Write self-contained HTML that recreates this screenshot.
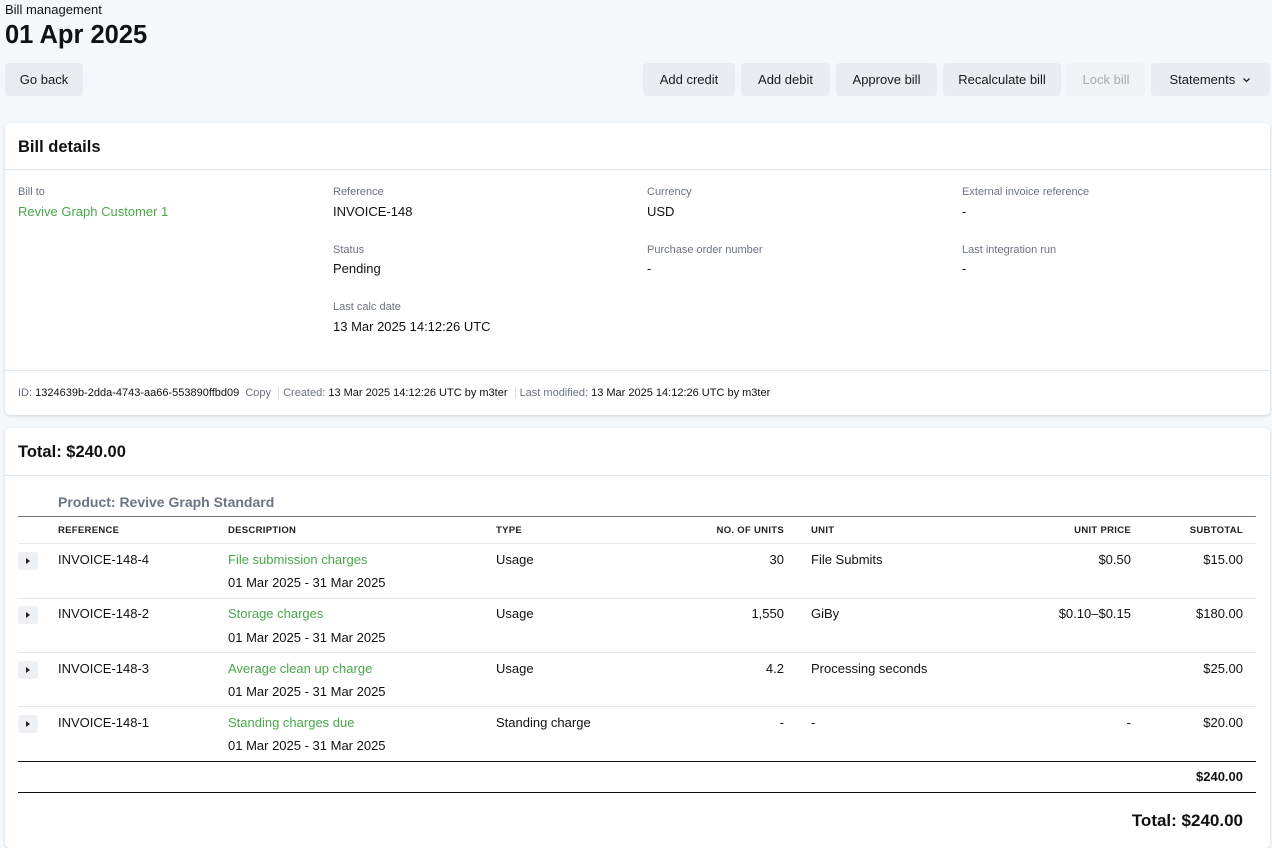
<!DOCTYPE html>
<html><head><meta charset="utf-8"><style>
*{box-sizing:border-box;margin:0;padding:0}
body{width:1272px;height:834px;overflow:hidden;background:#f5f8fb;font-family:"Liberation Sans",sans-serif;color:#111;font-size:13px;position:relative}
.a{position:absolute;white-space:nowrap}
.btn{position:absolute;top:63px;height:33px;background:#e9edf1;border-radius:4px;font-size:13px;line-height:33px;text-align:center;color:#1a1a1a}
.card{position:absolute;left:5px;width:1265px;background:#fff;border-radius:5px;box-shadow:0 1px 3px rgba(0,0,0,.15)}
.lbl{font-size:11px;color:#6b7380}
.g{color:#4aa84a}
.th{font-size:9.5px;font-weight:bold;letter-spacing:.3px;color:#222}
.r{text-align:right}
.hl{position:absolute;left:18px;width:1238px;height:1px;background:#e3e7ec}
.tog{position:absolute;left:18px;width:20px;height:18px;background:#eef1f4;border-radius:3px}
.tog:after{content:"";position:absolute;left:8px;top:6px;border-left:4px solid #222;border-top:3px solid transparent;border-bottom:3px solid transparent}
</style></head><body>
<div class="a" style="left:5px;top:2px;font-size:13px">Bill management</div>
<div class="a" style="left:5px;top:21px;font-size:25.5px;font-weight:bold">01 Apr 2025</div>
<div class="btn" style="left:5px;width:78px">Go back</div>
<div class="btn" style="left:643px;width:92px">Add credit</div>
<div class="btn" style="left:741px;width:89px">Add debit</div>
<div class="btn" style="left:836px;width:101px">Approve bill</div>
<div class="btn" style="left:943px;width:118px">Recalculate bill</div>
<div class="btn" style="left:1067px;width:78px;background:#f0f3f6;color:#aaa">Lock bill</div>
<div class="btn" style="left:1151px;width:119px">Statements &nbsp;<svg width="9" height="6" viewBox="0 0 9 6" style="vertical-align:1px"><path d="M1.5 1.5 L4.5 4.5 L7.5 1.5" fill="none" stroke="#222" stroke-width="1.3"/></svg></div>

<div class="card" style="top:123px;height:292px">
<div class="a" style="left:13px;top:15px;font-size:16.5px;font-weight:bold">Bill details</div>
<div class="a" style="left:0;top:46px;width:1265px;height:1px;background:#e3e7ec"></div>
<div class="a lbl" style="left:13px;top:63px">Bill to</div>
<div class="a g" style="left:13px;top:81px">Revive Graph Customer 1</div>
<div class="a lbl" style="left:328px;top:63px">Reference</div>
<div class="a" style="left:328px;top:81px">INVOICE-148</div>
<div class="a lbl" style="left:328px;top:121px">Status</div>
<div class="a" style="left:328px;top:138px">Pending</div>
<div class="a lbl" style="left:328px;top:178px">Last calc date</div>
<div class="a" style="left:328px;top:196px">13 Mar 2025 14:12:26 UTC</div>
<div class="a lbl" style="left:642px;top:63px">Currency</div>
<div class="a" style="left:642px;top:81px">USD</div>
<div class="a lbl" style="left:642px;top:121px">Purchase order number</div>
<div class="a" style="left:642px;top:138px">-</div>
<div class="a lbl" style="left:957px;top:63px">External invoice reference</div>
<div class="a" style="left:957px;top:81px">-</div>
<div class="a lbl" style="left:957px;top:121px">Last integration run</div>
<div class="a" style="left:957px;top:138px">-</div>
<div class="a" style="left:0;top:247px;width:1265px;height:1px;background:#e3e7ec"></div>
<div class="a" style="left:13px;top:264px;font-size:11px"><span class="lbl">ID:</span> 1324639b-2dda-4743-aa66-553890ffbd09 <span class="lbl">&nbsp;Copy</span> <span style="border-left:1px solid #ddd;margin:0 4px"></span> <span class="lbl">Created:</span> 13 Mar 2025 14:12:26 UTC by m3ter <span style="border-left:1px solid #ddd;margin:0 4px"></span> <span class="lbl">Last modified:</span> 13 Mar 2025 14:12:26 UTC by m3ter</div>
</div>

<div class="card" style="top:428px;height:420px"></div>
<div class="a" style="left:18px;top:443px;font-size:16.5px;font-weight:bold">Total: $240.00</div>
<div class="a" style="left:5px;top:475px;width:1265px;height:1px;background:#e3e7ec"></div>
<div class="a" style="left:58px;top:494px;font-size:14px;font-weight:bold;color:#6b7587">Product: Revive Graph Standard</div>
<div class="hl" style="top:516px;background:#6b7587"></div>
<div class="a th" style="left:58px;top:525px">REFERENCE</div>
<div class="a th" style="left:228px;top:525px">DESCRIPTION</div>
<div class="a th" style="left:496px;top:525px">TYPE</div>
<div class="a th r" style="left:684px;width:100px;top:525px">NO. OF UNITS</div>
<div class="a th" style="left:811px;top:525px">UNIT</div>
<div class="a th r" style="left:1031px;width:100px;top:525px">UNIT PRICE</div>
<div class="a th r" style="left:1143px;width:100px;top:525px">SUBTOTAL</div>
<div class="hl" style="top:543px"></div>

<div class="tog" style="top:552px"></div>
<div class="a" style="left:58px;top:552px">INVOICE-148-4</div>
<div class="a g" style="left:228px;top:552px">File submission charges</div>
<div class="a" style="left:228px;top:575px">01 Mar 2025 - 31 Mar 2025</div>
<div class="a" style="left:496px;top:552px">Usage</div>
<div class="a r" style="left:684px;width:100px;top:552px">30</div>
<div class="a" style="left:811px;top:552px">File Submits</div>
<div class="a r" style="left:1031px;width:100px;top:552px">$0.50</div>
<div class="a r" style="left:1143px;width:100px;top:552px">$15.00</div>
<div class="hl" style="top:598px"></div>

<div class="tog" style="top:606px"></div>
<div class="a" style="left:58px;top:606px">INVOICE-148-2</div>
<div class="a g" style="left:228px;top:606px">Storage charges</div>
<div class="a" style="left:228px;top:630px">01 Mar 2025 - 31 Mar 2025</div>
<div class="a" style="left:496px;top:606px">Usage</div>
<div class="a r" style="left:684px;width:100px;top:606px">1,550</div>
<div class="a" style="left:811px;top:606px">GiBy</div>
<div class="a r" style="left:1031px;width:100px;top:606px">$0.10–$0.15</div>
<div class="a r" style="left:1143px;width:100px;top:606px">$180.00</div>
<div class="hl" style="top:652px"></div>

<div class="tog" style="top:661px"></div>
<div class="a" style="left:58px;top:661px">INVOICE-148-3</div>
<div class="a g" style="left:228px;top:661px">Average clean up charge</div>
<div class="a" style="left:228px;top:684px">01 Mar 2025 - 31 Mar 2025</div>
<div class="a" style="left:496px;top:661px">Usage</div>
<div class="a r" style="left:684px;width:100px;top:661px">4.2</div>
<div class="a" style="left:811px;top:661px">Processing seconds</div>
<div class="a r" style="left:1143px;width:100px;top:661px">$25.00</div>
<div class="hl" style="top:706px"></div>

<div class="tog" style="top:715px"></div>
<div class="a" style="left:58px;top:715px">INVOICE-148-1</div>
<div class="a g" style="left:228px;top:715px">Standing charges due</div>
<div class="a" style="left:228px;top:738px">01 Mar 2025 - 31 Mar 2025</div>
<div class="a" style="left:496px;top:715px">Standing charge</div>
<div class="a r" style="left:684px;width:100px;top:715px">-</div>
<div class="a" style="left:811px;top:715px">-</div>
<div class="a r" style="left:1031px;width:100px;top:715px">-</div>
<div class="a r" style="left:1143px;width:100px;top:715px">$20.00</div>
<div class="hl" style="top:761px;background:#111"></div>
<div class="a r" style="left:1143px;width:100px;top:769px;font-weight:bold">$240.00</div>
<div class="hl" style="top:792px;background:#111"></div>
<div class="a r" style="left:1043px;width:200px;top:811px;font-size:17px;font-weight:bold">Total: $240.00</div>
</body></html>
